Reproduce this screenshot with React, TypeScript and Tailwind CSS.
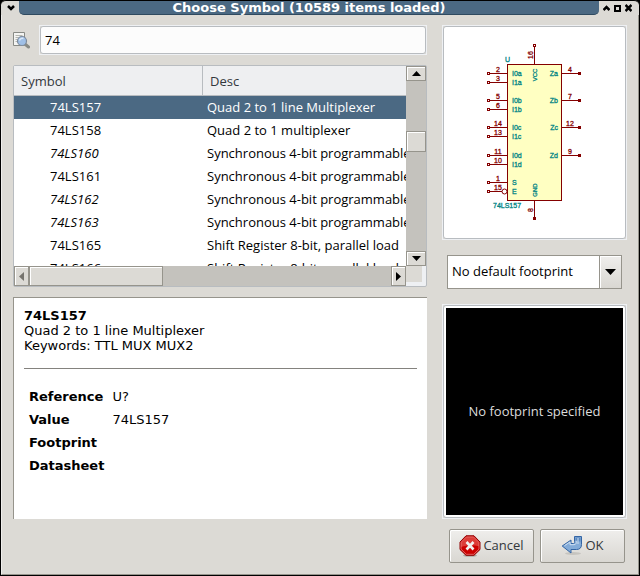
import type { ReactNode } from "react";

const SANS = "font-['Open_Sans','Noto_Sans',sans-serif]";
const DEJAVU = "font-['DejaVu_Sans',sans-serif]";

const symbols = [
  { name: "74LS157", desc: "Quad 2 to 1 line Multiplexer", alias: false, selected: true },
  { name: "74LS158", desc: "Quad 2 to 1 multiplexer", alias: false },
  { name: "74LS160", desc: "Synchronous 4-bit programmable", alias: true },
  { name: "74LS161", desc: "Synchronous 4-bit programmable", alias: false },
  { name: "74LS162", desc: "Synchronous 4-bit programmable", alias: true },
  { name: "74LS163", desc: "Synchronous 4-bit programmable", alias: true },
  { name: "74LS165", desc: "Shift Register 8-bit, parallel load", alias: false },
  { name: "74LS166", desc: "Shift Register 8-bit, parallel load", alias: false },
];

const fields = [
  ["Reference", "U?"],
  ["Value", "74LS157"],
  ["Footprint", ""],
  ["Datasheet", ""],
];

const leftPins: [number, string, string][] = [
  [73, "2", "I0a"],
  [82, "3", "I1a"],
  [100, "5", "I0b"],
  [109, "6", "I1b"],
  [127, "14", "I0c"],
  [136, "13", "I1c"],
  [155, "11", "I0d"],
  [164, "10", "I1d"],
  [182, "1", "S"],
  [191, "15", "E"],
];

const rightPins: [number, string, string][] = [
  [73, "4", "Za"],
  [100, "7", "Zb"],
  [127, "12", "Zc"],
  [155, "9", "Zd"],
];

function TitleBar() {
  return (
    <header className="flex h-[15px] shrink-0 overflow-hidden rounded-t-[5px] border-t border-black bg-[#dcdad5]">
      <button type="button" aria-label="Window menu" className="flex w-[18px] items-center justify-center pl-px">
        <svg width="8" height="6" viewBox="0 0 8 6" fill="none" stroke="#000" strokeWidth="2.5">
          <path d="M1 1l3 3 3-3" />
        </svg>
      </button>
      <h1
        className={`${DEJAVU} flex h-[14px] flex-1 items-center justify-center rounded-bl-[5px] rounded-br-[5px] border-b border-[#2f4a60] bg-[#4b6983] text-[13px] leading-[13px] font-bold whitespace-nowrap text-white`}
      >
        Choose Symbol (10589 items loaded)
      </h1>
      <div className="flex w-[40px] items-center gap-1 pl-1">
        <button type="button" aria-label="Minimize">
          <svg width="7" height="8" viewBox="0 0 7 8" fill="none" stroke="#000" strokeWidth="2.5">
            <path d="M.5 6l3-3 3 3" />
          </svg>
        </button>
        <button type="button" aria-label="Maximize">
          <svg width="7" height="8" viewBox="0 0 7 8" fill="none" stroke="#000" strokeWidth="2">
            <path d="M1 2h5v5H1z" />
          </svg>
        </button>
        <button type="button" aria-label="Close">
          <svg width="7" height="8" viewBox="0 0 7 8" fill="none" stroke="#000" strokeWidth="2.5">
            <path d="M.5 1l6 6M6.500 1L.5 7" />
          </svg>
        </button>
      </div>
    </header>
  );
}

function FindIcon() {
  return (
    <svg width="17" height="17" viewBox="0 0 17 17" aria-hidden="true">
      <path d="M.5 .5h11v13H.5z" fill="#f4f4f2" stroke="#888a85" />
      <path d="M2.500 3.500h7M2.500 5.500h3M2.500 7.500h2M2.500 9.500h2" stroke="#b4b6b0" />
      <path d="M12.500 12.500l3 2.500" stroke="#888a85" strokeWidth="3" strokeLinecap="round" />
      <circle cx="9" cy="9" r="4.500" fill="#9fbfe6" stroke="#7d8a9b" strokeWidth="1.200" />
      <path d="M6.500 8.500a3 3 0 0 1 4-2" stroke="#dbe9f8" strokeWidth="1.500" fill="none" />
    </svg>
  );
}

function CancelIcon() {
  return (
    <svg width="22" height="22" viewBox="0 0 22 22" aria-hidden="true">
      <ellipse cx="11" cy="20.500" rx="7" ry="1.300" fill="#aaa8a2" />
      <path d="M7 .8h8L21 7v7.500L15 20.300H7L1 14.500V7z" fill="#cc0000" stroke="#8f0000" />
      <path d="M7.500 1.900h7L20 7.300v4C14 9.500 8 10 2 12V7.300z" fill="#dc3c38" />
      <path d="M7.400 1.900h7.200L20 7.400v6.700l-5.400 5.200H7.400L2 14.100V7.400z" fill="none" stroke="#ec8a86" strokeWidth=".7" />
      <path d="M7.500 7l7 7.500M14.500 7l-7 7.500" stroke="#f1f1ef" strokeWidth="2.600" />
    </svg>
  );
}

function OkIcon() {
  return (
    <svg width="22" height="22" viewBox="0 0 22 22" aria-hidden="true">
      <ellipse cx="12" cy="18.500" rx="8" ry="1.500" fill="#c6c4bf" />
      <path
        d="M13.500 1.500h7v8c0 3.500-2 5-5 5H10V18L1.200 11 10 5v3.500h2.500c1 0 1.500-.5 1-2z"
        fill="#83abd8"
        stroke="#3465a4"
      />
      <path d="M14.500 2.500h5v4h-5z" fill="#5a88c0" />
      <path d="M3.500 10.700L9 7v2.700h4c2 0 2.500-1.500 2.200-4M17 3v6" fill="none" stroke="#cfe0f2" />
    </svg>
  );
}

function SymbolDrawing() {
  return (
    <svg
      viewBox="444 27 181 211"
      width="181"
      height="211"
      className="font-['Liberation_Sans',sans-serif]"
      shapeRendering="crispEdges"
      role="img"
      aria-label="74LS157 schematic symbol"
    >
      <rect x="507.500" y="64.500" width="54" height="136" fill="#ffffc2" stroke="#840000" />
      <g stroke="#840000" fill="none">
        {leftPins.map(([y]) => (
          <g key={y}>
            <path d={`M490 ${y + 0.5}H507`} />
            <rect x="487.500" y={y - 0.5} width="2" height="2" />
          </g>
        ))}
        {rightPins.map(([y]) => (
          <g key={y}>
            <path d={`M562 ${y + 0.5}H578`} />
            <rect x="578.500" y={y - 0.5} width="2" height="2" fill="#840000" />
          </g>
        ))}
        <path d="M534.500 47V64M534.500 201V217" />
        <rect x="533.500" y="44.500" width="2" height="2" />
        <rect x="533.500" y="217.500" width="2" height="2" fill="#840000" />
        <circle cx="504.500" cy="191.500" r="2.500" fill="#fff" shapeRendering="geometricPrecision" />
      </g>
      <g fill="#840000" stroke="#840000" strokeWidth=".3" fontSize="7">
        {leftPins.map(([y, num]) => (
          <text key={y} x="498" y={y - 1} textAnchor="middle">{num}</text>
        ))}
        {rightPins.map(([y, num]) => (
          <text key={y} x="570" y={y - 1} textAnchor="middle">{num}</text>
        ))}
        <text transform="translate(533 55) rotate(-90)" textAnchor="middle">16</text>
        <text transform="translate(533 210) rotate(-90)" textAnchor="middle">8</text>
      </g>
      <g fill="#008484" stroke="#008484" strokeWidth=".3" fontSize="7">
        {leftPins.map(([y, , label]) => (
          <text key={y} x="512" y={y + 3}>{label}</text>
        ))}
        {rightPins.map(([y, , label]) => (
          <text key={y} x="558" y={y + 3} textAnchor="end">{label}</text>
        ))}
        <text x="505" y="62">U</text>
        <text x="493" y="208">74LS157</text>
        <text transform="translate(537 75) rotate(-90)" textAnchor="middle" fontSize="6">VCC</text>
        <text transform="translate(537 190) rotate(-90)" textAnchor="middle" fontSize="6">GND</text>
      </g>
    </svg>
  );
}

function Frame({ className = "", children }: { className?: string; children: ReactNode }) {
  return (
    <div className={`flex flex-col border border-[#eef0f3] ${className}`}>
      <div className="flex flex-1 flex-col rounded-[3px] border border-[#b8bcc0] bg-white">{children}</div>
    </div>
  );
}

const bevel = "border border-[#96948c] bg-[#dcdad5] shadow-[inset_1px_1px_0_#fff]";

function Arrow({ d, fill = "#000" }: { d: string; fill?: string }) {
  return (
    <svg width="9" height="9" viewBox="0 0 9 9" fill={fill} aria-hidden="true">
      <path d={d} />
    </svg>
  );
}

function SymbolTable() {
  return (
    <section className="grid h-[222px] shrink-0 grid-cols-[minmax(0,1fr)_20px] grid-rows-[200px_20px] rounded-[2px] border border-[#b8bcc0] bg-[#eef0f3]">
      <div className="overflow-hidden bg-white">
        <table className="w-full table-fixed border-collapse text-left text-[13px] leading-[18px] whitespace-nowrap">
          <thead>
            <tr className="h-[30px] bg-[#eeeff1] text-[#33383c] shadow-[inset_0_-1px_0_#b8bcc0]">
              <th scope="col" className="w-[189px] p-0 pl-[7px] font-normal shadow-[inset_-1px_-1px_0_#b8bcc0]">Symbol</th>
              <th scope="col" className="p-0 pl-[7px] font-normal">Desc</th>
            </tr>
          </thead>
          <tbody>
            {symbols.map((s) => (
              <tr
                key={s.name}
                aria-selected={!!s.selected}
                className={s.selected ? "h-[23px] bg-[#4b6983] text-white" : "h-[23px] bg-white text-black"}
              >
                <td className={s.alias ? "p-0 pb-[2px] pl-9 italic" : "p-0 pb-[2px] pl-9"}>{s.name}</td>
                <td className="p-0 pb-[2px] pl-1">{s.desc}</td>
              </tr>
            ))}
          </tbody>
        </table>
      </div>
      <div className="flex flex-col bg-[#c4c2bd]">
        <button type="button" aria-label="Scroll up" className={`flex h-[15px] items-center justify-center ${bevel}`}>
          <Arrow d="M0 7h9L4.500 2z" />
        </button>
        <div className="h-[50px]" />
        <div className={`h-[21px] ${bevel}`} />
        <div className="flex-1" />
        <button type="button" aria-label="Scroll down" className={`flex h-[15px] items-center justify-center ${bevel}`}>
          <Arrow d="M0 2h9L4.500 7z" />
        </button>
      </div>
      <div className="flex bg-[#c4c2bd]">
        <button type="button" aria-label="Scroll left" className={`flex w-[15px] items-center justify-center ${bevel}`}>
          <Arrow d="M7 0v9L2 4.500z" fill="#76746e" />
        </button>
        <div className={`w-[134px] ${bevel}`} />
        <div className="flex-1" />
        <button type="button" aria-label="Scroll right" className={`flex w-[15px] items-center justify-center ${bevel}`}>
          <Arrow d="M2 0v9L7 4.500z" />
        </button>
      </div>
      <div className="mr-1 mb-1 bg-[#dcdad5]" />
    </section>
  );
}

function Details() {
  return (
    <section className={`${DEJAVU} flex-1 border-t border-l border-[#96948c] bg-white px-[10px] pt-[10px] text-[13px] leading-[15px] text-black`}>
      <h2 className="font-bold">74LS157</h2>
      <p>Quad 2 to 1 line Multiplexer</p>
      <p>Keywords: TTL MUX MUX2</p>
      <hr className="mt-[15px] mb-4 border-[#84827e]" />
      <table className="ml-[5px] text-left">
        <tbody>
          {fields.map(([label, value]) => (
            <tr key={label} className="h-[23px]">
              <th scope="row" className="p-0 pr-2 font-bold">{label}</th>
              <td className="p-0">{value}</td>
            </tr>
          ))}
        </tbody>
      </table>
    </section>
  );
}

function DialogButton({ icon, children }: { icon: ReactNode; children: ReactNode }) {
  return (
    <button
      type="button"
      className="flex h-[34px] w-[85px] items-center justify-center gap-[2px] rounded-[2px] border border-[#96948c] bg-linear-to-b from-[#efeeec] to-[#d9d7d2] text-[13px] text-[#33383c] shadow-[inset_1px_1px_0_#fff]"
    >
      {icon}
      {children}
    </button>
  );
}

export default function App() {
  return (
    <div className={`${SANS} flex min-h-screen flex-col bg-black text-[13px]`}>
      <div className="flex flex-1 flex-col rounded-t-[6px] border-x border-b border-black bg-[#dcdad5]">
        <TitleBar />
        <main className="flex flex-1 flex-col border-r border-b border-l border-r-[#96948c] border-b-[#96948c] border-l-[#efeeec] px-[11px] pt-[10px] pb-[11px]">
          <div className="flex flex-1 gap-[15px]">
            <div className="flex min-w-0 flex-1 flex-col gap-[10px]">
              <label className="flex items-center gap-[9px]">
                <FindIcon />
                <span className="flex h-[30px] flex-1 border border-[#eef0f3]">
                  <input
                    type="text"
                    aria-label="Search symbols"
                    defaultValue="74"
                    className="w-full rounded-[3px] border border-[#b8bcc0] bg-[#fcfcfc] px-1 pt-[2px] text-[13px] text-black outline-none"
                  />
                </span>
              </label>
              <SymbolTable />
              <Details />
            </div>
            <div className="flex w-[185px] shrink-0 flex-col">
              <Frame>
                <SymbolDrawing />
              </Frame>
              <div className="relative mx-[5px] my-[15px] h-[34px]">
                <select
                  aria-label="Footprint"
                  className="h-full w-full appearance-none border border-[#96948c] bg-white pr-6 pl-1 text-[13px] text-black outline-none"
                >
                  <option>No default footprint</option>
                </select>
                <span className="pointer-events-none absolute inset-y-0 right-0 flex w-[23px] items-center justify-center border border-[#96948c] bg-linear-to-b from-[#efeeec] to-[#d9d7d2] shadow-[inset_1px_1px_0_#fff]">
                  <svg width="11" height="6" viewBox="0 0 11 6" aria-hidden="true">
                    <path d="M0 0h11L5.500 6z" />
                  </svg>
                </span>
              </div>
              <Frame className="flex-1">
                <div className="m-[2px] flex flex-1 items-center justify-center bg-black text-[13px] text-[#dcdcdc]">
                  No footprint specified
                </div>
              </Frame>
            </div>
          </div>
          <footer className="mt-[10px] flex justify-end gap-[6px] pr-[2px]">
            <DialogButton icon={<CancelIcon />}>Cancel</DialogButton>
            <DialogButton icon={<OkIcon />}>OK</DialogButton>
          </footer>
        </main>
      </div>
    </div>
  );
}
